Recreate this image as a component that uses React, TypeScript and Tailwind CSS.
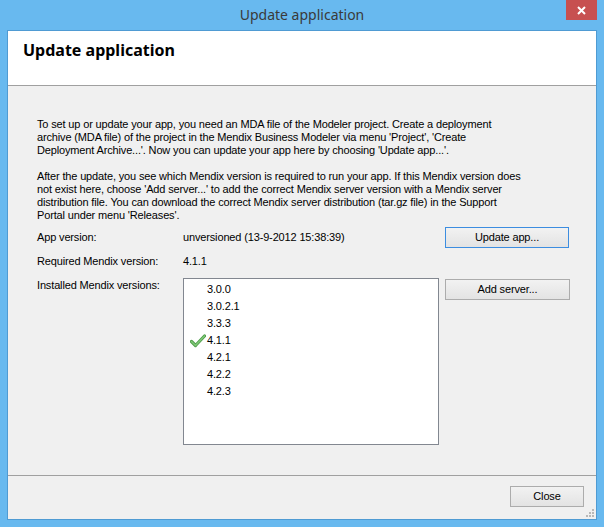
import React from "react";

function Btn({ children, focus, className }: { children: React.ReactNode; focus?: boolean; className?: string }) {
  return (
    <div
      className={`flex h-[21px] items-center justify-center border bg-gradient-to-b from-[#f2f2f2] to-[#e3e3e3] text-[11px] text-black ${
        focus ? "border-[#3c8de0]" : "border-[#acacac]"
      } ${className ?? ""}`}
    >
      {children}
    </div>
  );
}

function Check() {
  return (
    <svg width="16" height="14" viewBox="0 0 16 14">
      <path d="M1.5 7.5 L5.5 11.5 L14.5 2" fill="none" stroke="#4f9d4a" strokeWidth="3.2" strokeLinecap="round" strokeLinejoin="round" />
      <path d="M1.5 7.5 L5.5 11.5 L14.5 2" fill="none" stroke="#7fc877" strokeWidth="1.4" strokeLinecap="round" strokeLinejoin="round" />
    </svg>
  );
}

export default function App() {
  const versions = ["3.0.0", "3.0.2.1", "3.3.3", "4.1.1", "4.2.1", "4.2.2", "4.2.3"];
  return (
    <div className="flex h-[527px] w-[604px] flex-col bg-[#68b9ef] font-['Liberation_Sans',Arial,sans-serif] tracking-[-0.15px]">
      {/* title bar */}
      <div className="relative flex h-[30px] shrink-0 items-center justify-center">
        <span className="pb-[1px] font-['Noto_Sans',sans-serif] text-[14px] tracking-normal text-[#3a3a3a]">
          Update application
        </span>
        <div className="absolute right-[7px] top-0 flex h-[20px] w-[31px] items-center justify-center bg-[#c75050]">
          <svg width="9" height="9" viewBox="0 0 9 9">
            <path d="M1 1 L8 8 M8 1 L1 8" stroke="#ffffff" strokeWidth="2" />
          </svg>
        </div>
      </div>
      {/* client */}
      <div className="mx-[7px] mb-[7px] flex flex-1 flex-col border border-[#4f9bd3] bg-[#f0f0f0]">
        <div className="h-[55px] shrink-0 border-b border-[#a0a0a0] bg-white pl-[15px] pt-[8px]">
          <div className="font-['Noto_Sans',sans-serif] text-[16px] font-bold leading-[22px] tracking-normal text-black">
            Update application
          </div>
        </div>
        <div className="flex flex-1 flex-col pl-[29px] pt-[32px] text-[11px] leading-[13px] text-black">
          <p className="whitespace-nowrap">
            To set up or update your app, you need an MDA file of the Modeler project. Create a deployment
            <br />
            archive (MDA file) of the project in the Mendix Business Modeler via menu 'Project', 'Create
            <br />
            Deployment Archive...'. Now you can update your app here by choosing 'Update app...'.
          </p>
          <p className="mt-[13px] whitespace-nowrap">
            After the update, you see which Mendix version is required to run your app. If this Mendix version does
            <br />
            not exist here, choose 'Add server...' to add the correct Mendix server version with a Mendix server
            <br />
            distribution file. You can download the correct Mendix server distribution (tar.gz file) in the Support
            <br />
            Portal under menu 'Releases'.
          </p>
          <div className="mt-[5px] flex items-center">
            <span className="w-[146px] shrink-0 whitespace-nowrap">App version:</span>
            <span className="w-[262px] shrink-0 whitespace-nowrap">unversioned (13-9-2012 15:38:39)</span>
            <Btn focus className="w-[124px]">Update app...</Btn>
          </div>
          <div className="mt-[7px] flex">
            <span className="w-[146px] shrink-0 whitespace-nowrap">Required Mendix version:</span>
            <span>4.1.1</span>
          </div>
          <div className="mt-[10px] flex items-start">
            <span className="w-[146px] shrink-0 whitespace-nowrap pt-[1px]">Installed Mendix versions:</span>
            <div className="h-[167px] w-[256px] shrink-0 border border-[#828790] bg-white pt-[2px]">
              {versions.map((v) => (
                <div key={v} className="flex h-[17px] items-center">
                  <div className="flex w-[23px] justify-end pr-[1px]">{v === "4.1.1" ? <Check /> : null}</div>
                  <span>{v}</span>
                </div>
              ))}
            </div>
            <Btn className="ml-[6px] mt-[1px] w-[125px]">Add server...</Btn>
          </div>
        </div>
        <div className="relative flex h-[44px] shrink-0 justify-end border-t border-[#a0a0a0] pr-[12px] pt-[10px]">
          <Btn className="w-[74px]">Close</Btn>
          <div className="absolute bottom-[2px] right-[2px] grid grid-cols-3 gap-[1px]">
            {[0, 0, 1, 0, 1, 1, 1, 1, 1].map((on, i) => (
              <div key={i} className={`h-[2px] w-[2px] ${on ? "bg-[#b8b8b8]" : ""}`} />
            ))}
          </div>
        </div>
      </div>
    </div>
  );
}
